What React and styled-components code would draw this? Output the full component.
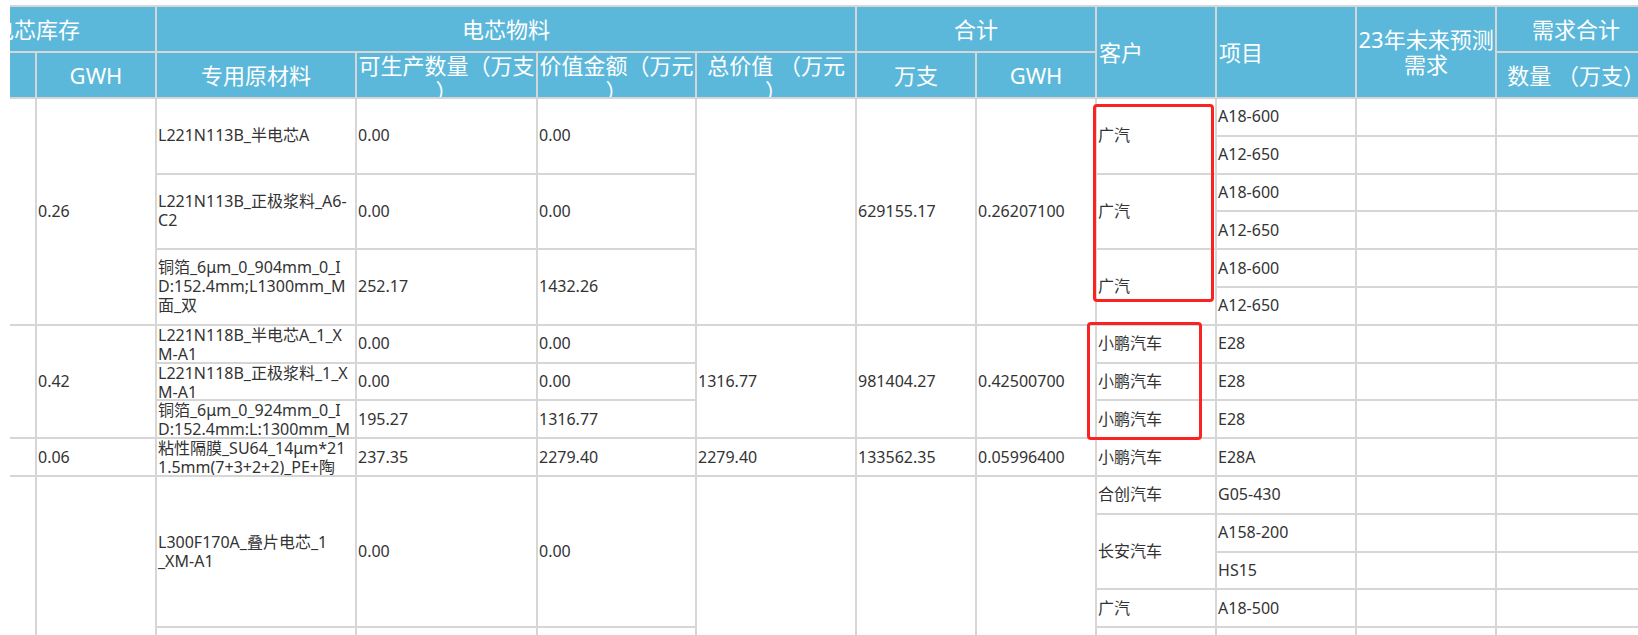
import React from 'react';
import styled, { createGlobalStyle } from 'styled-components';

const ROW = 37.8;
const HEAD = 46;
const LINE = '#d6d6d6';
const BLUE = '#5bb8da';

const Global = createGlobalStyle`
  html, body { margin: 0; padding: 0; background: #fff; }
  body { font-family: "Noto Sans", "Noto Sans CJK SC", sans-serif; }
`;

const Page = styled.div`
  position: relative;
  width: 1638px;
  height: 635px;
  overflow: hidden;
  background: #fff;
  box-sizing: border-box;
  padding: 5px 0 0 10px;
`;

const Viewport = styled.div`
  width: 100%;
  height: 100%;
  overflow: hidden;
`;

const Table = styled.table`
  border-collapse: collapse;
  table-layout: fixed;
  width: 1740px;
  margin-left: -95px;
`;

const HeadCell = styled.th`
  background: ${BLUE};
  color: #fff;
  font-weight: 400;
  font-size: 22px;
  border: 2px solid ${LINE};
  padding: 0;
  vertical-align: top;
`;

const HeadBox = styled.div`
  height: ${p => p.$rows * HEAD - 2}px;
  display: flex;
  align-items: safe center;
  justify-content: ${p => (p.$align === 'left' ? 'flex-start' : 'center')};
  text-align: ${p => p.$align || 'center'};
  line-height: 25px;
  padding: 0 2px;
  overflow: hidden;
  white-space: nowrap;
`;

const BodyCell = styled.td`
  border: 2px solid ${LINE};
  padding: 0;
  vertical-align: top;
  font-size: 16px;
  color: #333;
`;

const CellBox = styled.div`
  height: ${p => p.$rows * ROW - 2}px;
  display: flex;
  align-items: safe center;
  line-height: 19px;
  padding: 0 2px 0 1px;
  overflow: hidden;
  white-space: nowrap;
`;

const Stack = styled.div`
  display: flex;
  flex-direction: column;
`;

const Line = styled.span`
  display: block;
  white-space: nowrap;
`;

const Marker = styled.div`
  position: absolute;
  left: ${p => p.$x}px;
  top: ${p => p.$y}px;
  width: ${p => p.$w}px;
  height: ${p => p.$h}px;
  border: 3px solid #fb2222;
  border-radius: 4px;
  box-sizing: border-box;
  pointer-events: none;
`;

const H = ({ rows = 1, span = 1, align, children }) => (
  <HeadCell rowSpan={rows} colSpan={span}>
    <HeadBox $rows={rows} $align={align}>{children}</HeadBox>
  </HeadCell>
);

const C = ({ rows = 1, children }) => (
  <BodyCell rowSpan={rows}>
    <CellBox $rows={rows}>{children}</CellBox>
  </BodyCell>
);

const Lines = ({ items }) => (
  <Stack>
    {items.map((t, i) => (
      <Line key={i}>{t}</Line>
    ))}
  </Stack>
);

const widths = [120, 120, 200, 181, 159, 160, 120, 120, 120, 140, 140, 160];

export default function App() {
  return (
    <>
      <Global />
      <Page>
        <Viewport>
          <Table>
            <colgroup>
              {widths.map((w, i) => (
                <col key={i} style={{ width: w }} />
              ))}
            </colgroup>
            <thead>
              <tr>
                <H span={2}>电芯库存</H>
                <H span={4}>电芯物料</H>
                <H span={2}>合计</H>
                <H rows={2} align="left">客户</H>
                <H rows={2} align="left">项目</H>
                <H rows={2}>
                  <div>23年未来预测<br />需求</div>
                </H>
                <H>需求合计</H>
              </tr>
              <tr>
                <H />
                <H>GWH</H>
                <H>专用原材料</H>
                <H><div>可生产数量（万支<br />）</div></H>
                <H><div>价值金额（万元<br />）</div></H>
                <H><div>总价值 （万元<br />）</div></H>
                <H>万支</H>
                <H>GWH</H>
                <H>数量 （万支）</H>
              </tr>
            </thead>
            <tbody>
              {/* group 0.26 */}
              <tr>
                <C rows={6} />
                <C rows={6}>0.26</C>
                <C rows={2}><Lines items={['L221N113B_半电芯A']} /></C>
                <C rows={2}>0.00</C>
                <C rows={2}>0.00</C>
                <C rows={6} />
                <C rows={6}>629155.17</C>
                <C rows={6}>0.26207100</C>
                <C rows={2}>广汽</C>
                <C>A18-600</C>
                <C />
                <C />
              </tr>
              <tr>
                <C>A12-650</C>
                <C />
                <C />
              </tr>
              <tr>
                <C rows={2}><Lines items={['L221N113B_正极浆料_A6-', 'C2']} /></C>
                <C rows={2}>0.00</C>
                <C rows={2}>0.00</C>
                <C rows={2}>广汽</C>
                <C>A18-600</C>
                <C />
                <C />
              </tr>
              <tr>
                <C>A12-650</C>
                <C />
                <C />
              </tr>
              <tr>
                <C rows={2}><Lines items={['铜箔_6μm_0_904mm_0_I', 'D:152.4mm;L1300mm_M', '面_双']} /></C>
                <C rows={2}>252.17</C>
                <C rows={2}>1432.26</C>
                <C rows={2}>广汽</C>
                <C>A18-600</C>
                <C />
                <C />
              </tr>
              <tr>
                <C>A12-650</C>
                <C />
                <C />
              </tr>

              {/* group 0.42 */}
              <tr>
                <C rows={3} />
                <C rows={3}>0.42</C>
                <C><Lines items={['L221N118B_半电芯A_1_X', 'M-A1']} /></C>
                <C>0.00</C>
                <C>0.00</C>
                <C rows={3}>1316.77</C>
                <C rows={3}>981404.27</C>
                <C rows={3}>0.42500700</C>
                <C>小鹏汽车</C>
                <C>E28</C>
                <C />
                <C />
              </tr>
              <tr>
                <C><Lines items={['L221N118B_正极浆料_1_X', 'M-A1']} /></C>
                <C>0.00</C>
                <C>0.00</C>
                <C>小鹏汽车</C>
                <C>E28</C>
                <C />
                <C />
              </tr>
              <tr>
                <C><Lines items={['铜箔_6μm_0_924mm_0_I', 'D:152.4mm:L:1300mm_M', '面_双']} /></C>
                <C>195.27</C>
                <C>1316.77</C>
                <C>小鹏汽车</C>
                <C>E28</C>
                <C />
                <C />
              </tr>

              {/* group 0.06 */}
              <tr>
                <C />
                <C>0.06</C>
                <C><Lines items={['粘性隔膜_SU64_14μm*21', '1.5mm(7+3+2+2)_PE+陶', '瓷']} /></C>
                <C>237.35</C>
                <C>2279.40</C>
                <C>2279.40</C>
                <C>133562.35</C>
                <C>0.05996400</C>
                <C>小鹏汽车</C>
                <C>E28A</C>
                <C />
                <C />
              </tr>

              {/* group L300F170A */}
              <tr>
                <C rows={8} />
                <C rows={8} />
                <C rows={4}><Lines items={['L300F170A_叠片电芯_1', '_XM-A1']} /></C>
                <C rows={4}>0.00</C>
                <C rows={4}>0.00</C>
                <C rows={8} />
                <C rows={8} />
                <C rows={8} />
                <C>合创汽车</C>
                <C>G05-430</C>
                <C />
                <C />
              </tr>
              <tr>
                <C rows={2}>长安汽车</C>
                <C>A158-200</C>
                <C />
                <C />
              </tr>
              <tr>
                <C>HS15</C>
                <C />
                <C />
              </tr>
              <tr>
                <C>广汽</C>
                <C>A18-500</C>
                <C />
                <C />
              </tr>
              <tr>
                <C rows={4}><Lines items={['L300F170A_正极浆料_1', '_XM-A1']} /></C>
                <C rows={4}>0.00</C>
                <C rows={4}>0.00</C>
                <C rows={2}>广汽</C>
                <C>A18-600</C>
                <C />
                <C />
              </tr>
              <tr>
                <C>A12-650</C>
                <C />
                <C />
              </tr>
              <tr>
                <C rows={2}>合创汽车</C>
                <C>G05-430</C>
                <C />
                <C />
              </tr>
              <tr>
                <C>A06-500</C>
                <C />
                <C />
              </tr>
            </tbody>
          </Table>
        </Viewport>
        <Marker $x={1093} $y={104} $w={121} $h={198} />
        <Marker $x={1087} $y={322} $w={115} $h={118} />
      </Page>
    </>
  );
}
